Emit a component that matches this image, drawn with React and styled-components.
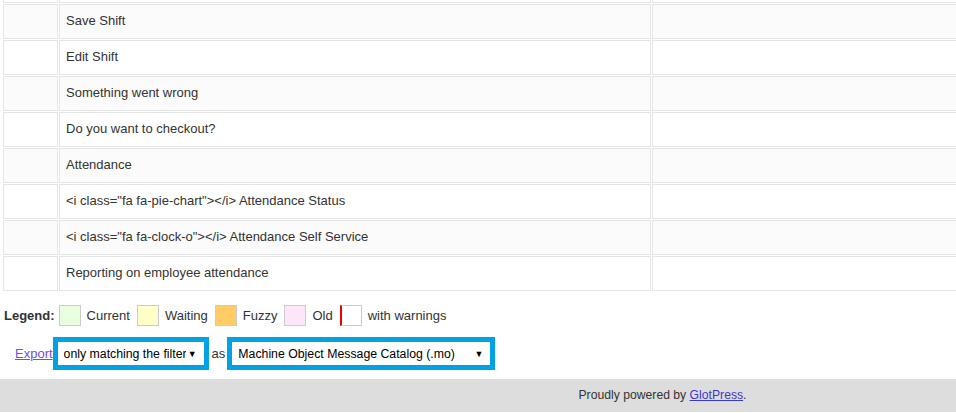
import React from 'react';
import styled, { createGlobalStyle } from 'styled-components';

const GlobalStyle = createGlobalStyle`
  html, body {
    margin: 0;
    padding: 0;
    background: #fff;
  }
  body {
    font-family: "Liberation Sans", Arial, sans-serif;
    font-size: 13px;
    color: #333;
    overflow: hidden;
  }
`

const Page = styled.div`
  width: 956px;
  overflow: hidden;
`

const Inner = styled.div`
  width: 1325px;
`

const TableClip = styled.div`
  overflow: hidden;
`

const Table = styled.table`
  border-collapse: separate;
  border-spacing: 1px;
  margin: -33px 0 0 2px;
  table-layout: fixed;
  width: 1321px;
`

const Row = styled.tr`
  background: ${props => props.$odd ? '#fbfbfb' : '#fff'};
`

const Cell = styled.td`
  border: 1px solid #e6e6e6;
  height: 35px;
  box-sizing: border-box;
  padding: 0 7px 2px 6px;
  vertical-align: middle;
  font-size: 13px;
  color: #333;
  white-space: nowrap;
`

const Legend = styled.div`
  display: flex;
  align-items: center;
  gap: 6px;
  margin: 13px 0 0 4px;
  height: 21px;
`

const LegendTitle = styled.strong`
  font-weight: bold;
  margin-right: -2px;
`

const Swatch = styled.span`
  display: inline-block;
  box-sizing: border-box;
  width: 22px;
  height: 21px;
  border: 1px solid #ccc;
  background: ${props => props.$color};
  ${props => props.$warning && 'border-left: 2px solid #e00;'}
`

const LegendLabel = styled.span`
  margin-right: 1px;
`

const ExportRow = styled.div`
  display: flex;
  align-items: center;
  margin: 11px 0 0 15px;
  height: 33px;
`

const ExportLink = styled.a`
  color: #6b52d8;
  text-decoration: underline;
  cursor: pointer;
`

const As = styled.span`
  margin: 0 2px 0 3px;
`

const SelectBox = styled.div`
  display: flex;
  align-items: center;
  box-sizing: border-box;
  width: ${props => props.$width}px;
  height: 33px;
  border: 5px solid #00a2e3;
  background: #fff;
`

const Select = styled.select`
  flex: 1;
  width: 0;
  min-width: 0;
  appearance: none;
  -webkit-appearance: none;
  border: none;
  outline: none;
  background: transparent;
  font-family: "Liberation Sans", Arial, sans-serif;
  font-size: 12.3px;
  color: #000;
  padding: 0 0 0 6px;
  height: 100%;
`

const Arrow = styled.span`
  font-size: 9px;
  color: #000;
  margin: 0 7px 0 2px;
  pointer-events: none;
`

const Footer = styled.div`
  margin-top: 9px;
  height: 33px;
  line-height: 33px;
  background: #ddd;
  text-align: center;
  font-size: 12.2px;
  color: #333;
`

const FooterLink = styled.a`
  color: #3a3ad0;
  text-decoration: underline;
`

const rows = [
  '',
  'Save Shift',
  'Edit Shift',
  'Something went wrong',
  'Do you want to checkout?',
  'Attendance',
  '<i class="fa fa-pie-chart"></i> Attendance Status',
  '<i class="fa fa-clock-o"></i> Attendance Self Service',
  'Reporting on employee attendance',
];

const legend = [
  { label: 'Current', color: '#e8ffe0' },
  { label: 'Waiting', color: '#ffffc8' },
  { label: 'Fuzzy', color: '#ffcc66' },
  { label: 'Old', color: '#fde6f7' },
  { label: 'with warnings', color: '#fff', warning: true },
];

export default function App() {
  return (
    <Page>
      <GlobalStyle />
      <Inner>
        <TableClip>
          <Table>
            <colgroup>
              <col style={{ width: 55 }} />
              <col style={{ width: 592 }} />
              <col />
            </colgroup>
            <tbody>
              {rows.map((text, i) => (
                <Row key={i} $odd={i % 2 === 1}>
                  <Cell />
                  <Cell>{text}</Cell>
                  <Cell />
                </Row>
              ))}
            </tbody>
          </Table>
        </TableClip>

        <Legend>
          <LegendTitle>Legend:</LegendTitle>
          {legend.map(item => (
            <React.Fragment key={item.label}>
              <Swatch $color={item.color} $warning={item.warning} />
              <LegendLabel>{item.label}</LegendLabel>
            </React.Fragment>
          ))}
        </Legend>

        <ExportRow>
          <ExportLink>Export</ExportLink>
          <SelectBox $width={156}>
            <Select defaultValue="filtered">
              <option value="all">all current</option>
              <option value="filtered">only matching the filter</option>
            </Select>
            <Arrow>▼</Arrow>
          </SelectBox>
          <As>as</As>
          <SelectBox $width={268}>
            <Select defaultValue="mo">
              <option value="po">Portable Object Message Catalog (.po/.pot)</option>
              <option value="mo">Machine Object Message Catalog (.mo)</option>
            </Select>
            <Arrow>▼</Arrow>
          </SelectBox>
        </ExportRow>

        <Footer>
          Proudly powered by <FooterLink>GlotPress</FooterLink>.
        </Footer>
      </Inner>
    </Page>
  );
}
